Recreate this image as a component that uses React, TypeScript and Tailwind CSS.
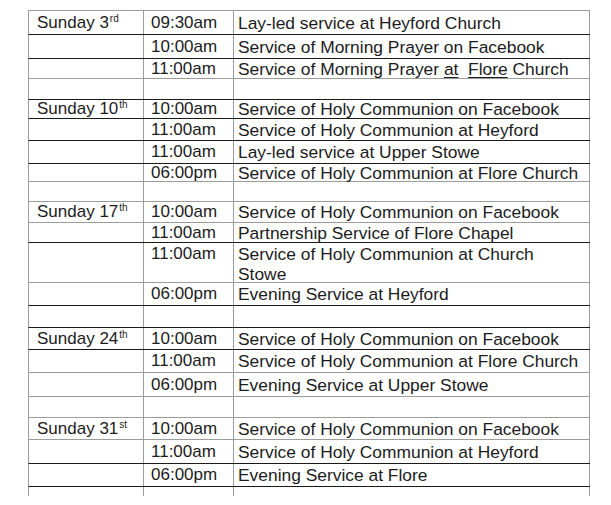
// Service rota table, scanned-document look.
import type { ReactNode } from 'react';

const K = 'border-t-[#1a1a1a]';
const G = 'border-t-[#9c9c9c]';

interface Row {
  day?: string;
  sup?: string;
  time?: string;
  text?: ReactNode;
  h: string;
  line: string;
  tall?: boolean;
}

const rows: Row[] = [
  { day: 'Sunday 3', sup: 'rd', time: '09:30am', text: 'Lay-led service at Heyford Church', h: 'h-[24px]', line: G },
  { time: '10:00am', text: 'Service of Morning Prayer on Facebook', h: 'h-[24px]', line: K },
  {
    time: '11:00am',
    text: (
      <>
        Service of Morning Prayer <span className="underline underline-offset-2">at</span>
        {'\u00a0\u00a0'}
        <span className="underline underline-offset-2">Flore</span> Church
      </>
    ),
    h: 'h-[20px]',
    line: K,
  },
  { h: 'h-[21px]', line: G },
  { day: 'Sunday 10', sup: 'th', time: '10:00am', text: 'Service of Holy Communion on Facebook', h: 'h-[19px]', line: K },
  { time: '11:00am', text: 'Service of Holy Communion at Heyford', h: 'h-[22px]', line: K },
  { time: '11:00am', text: 'Lay-led service at Upper Stowe', h: 'h-[23px]', line: K },
  { time: '06:00pm', text: 'Service of Holy Communion at Flore Church', h: 'h-[18px]', line: K },
  { h: 'h-[20px]', line: G },
  { day: 'Sunday 17', sup: 'th', time: '10:00am', text: 'Service of Holy Communion on Facebook', h: 'h-[21px]', line: G },
  { time: '11:00am', text: 'Partnership Service of Flore Chapel', h: 'h-[20px]', line: G },
  {
    time: '11:00am',
    text: (
      <>
        Service of Holy Communion at Church
        <br />
        Stowe
      </>
    ),
    h: 'h-[40px]',
    line: K,
    tall: true,
  },
  { time: '06:00pm', text: 'Evening Service at Heyford', h: 'h-[23px]', line: G },
  { h: 'h-[22px]', line: K },
  { day: 'Sunday 24', sup: 'th', time: '10:00am', text: 'Service of Holy Communion on Facebook', h: 'h-[22px]', line: K },
  { time: '11:00am', text: 'Service of Holy Communion at Flore Church', h: 'h-[23px]', line: K },
  { time: '06:00pm', text: 'Evening Service at Upper Stowe', h: 'h-[24px]', line: G },
  { h: 'h-[21px]', line: G },
  { day: 'Sunday 31', sup: 'st', time: '10:00am', text: 'Service of Holy Communion on Facebook', h: 'h-[22px]', line: G },
  { time: '11:00am', text: 'Service of Holy Communion at Heyford', h: 'h-[24px]', line: G },
  { time: '06:00pm', text: 'Evening Service at Flore', h: 'h-[23px]', line: K },
  { h: 'h-[10px]', line: K },
];

function RotaRow({ row }: { row: Row }) {
  const align = row.tall ? 'items-start pt-px' : 'items-center';
  return (
    <div className={`flex border-t border-l border-l-[#9c9c9c] ${row.line} ${row.h}`}>
      <div className={`flex w-[115px] shrink-0 border-r border-[#9c9c9c] pl-[8px] ${align}`}>
        {row.day && (
          <span>
            {row.day}
            <sup className="relative -top-[6px] ml-px align-baseline text-[10px]">{row.sup}</sup>
          </span>
        )}
      </div>
      <div className={`flex w-[90px] shrink-0 border-r border-[#9c9c9c] pl-[7px] ${align}`}>{row.time}</div>
      <div className={`flex w-[356px] shrink-0 border-r border-[#9c9c9c] pl-[4px] text-[17.4px] ${align}`}>
        <span className="whitespace-nowrap">{row.text}</span>
      </div>
    </div>
  );
}

export default function App() {
  return (
    <div className="h-[505px] w-[611px] bg-white pl-[28px] pt-[10px] font-['Liberation_Sans',Arial,sans-serif] text-[17px] leading-[20px] text-[#1c1c1c]">
      <div className="w-[562px]">
        {rows.map((row, i) => (
          <RotaRow key={i} row={row} />
        ))}
      </div>
    </div>
  );
}
